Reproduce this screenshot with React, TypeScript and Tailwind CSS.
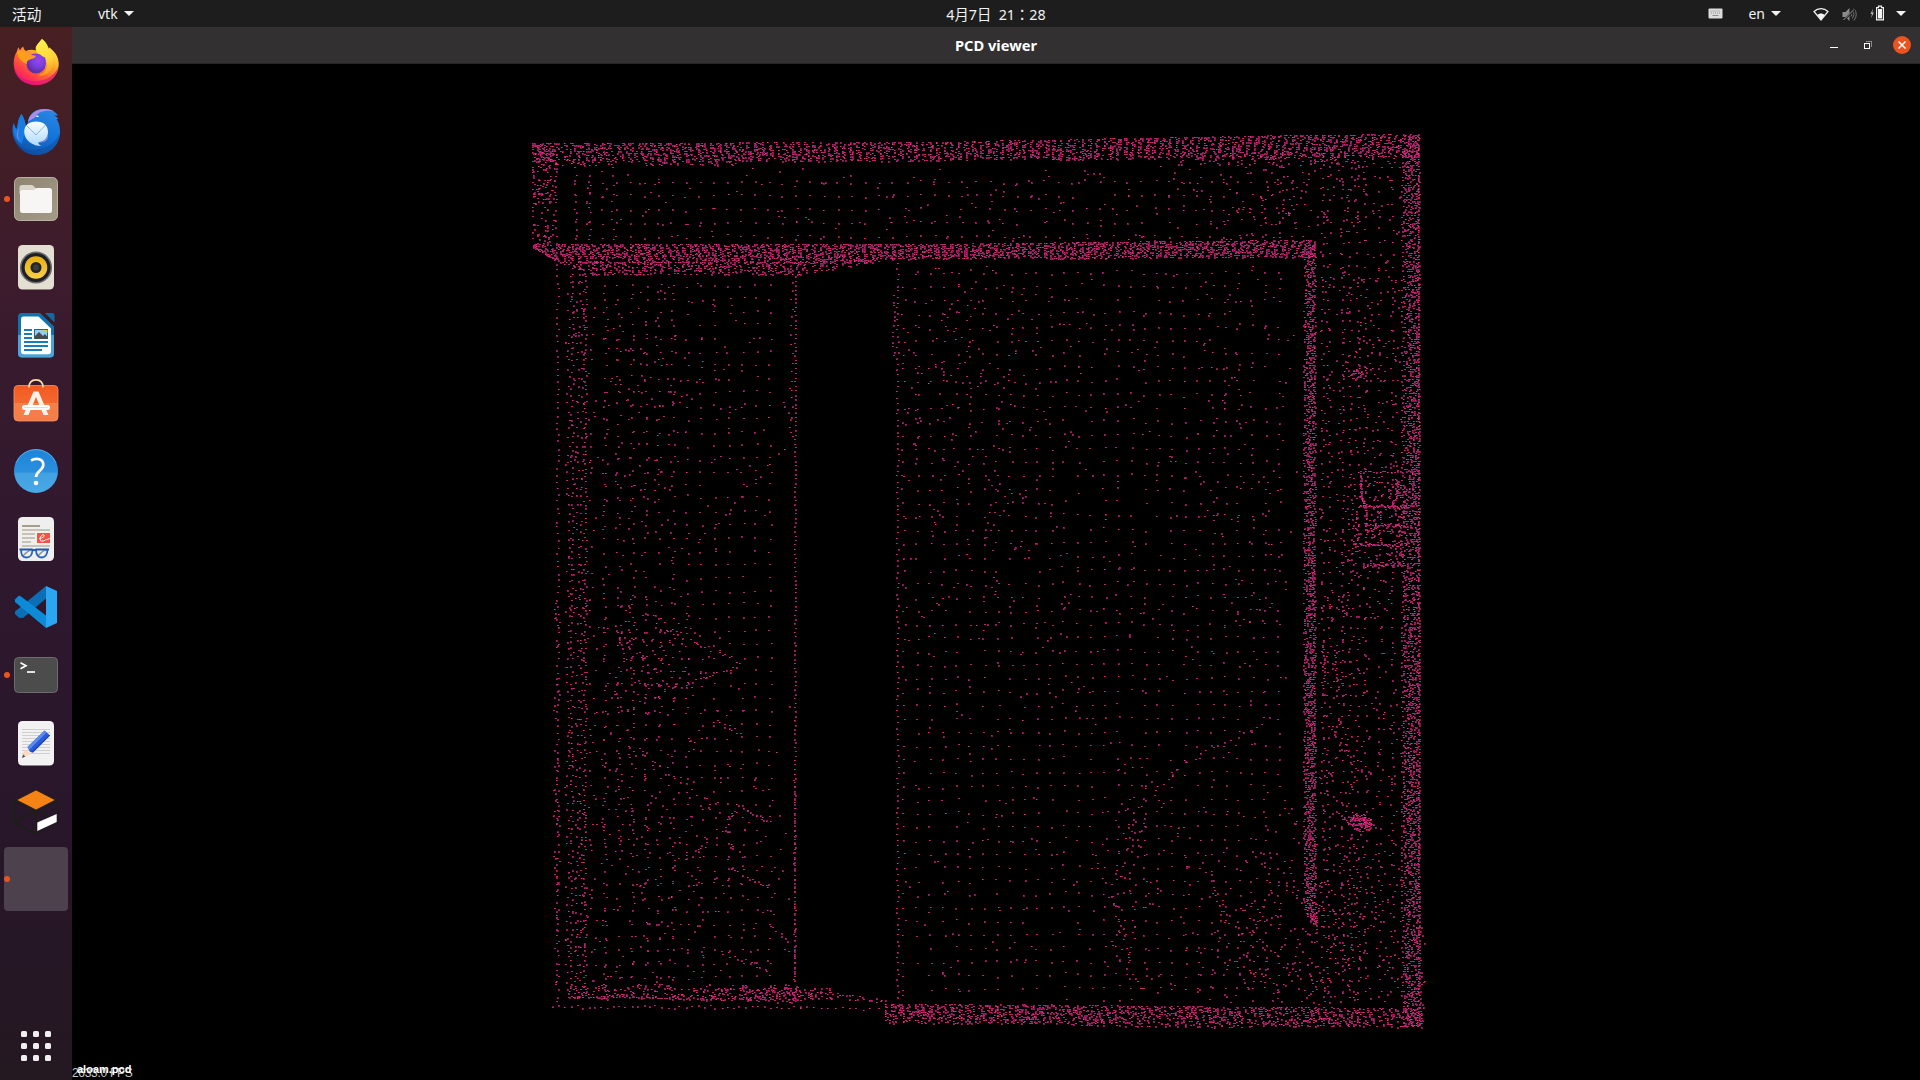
import React from 'react';

type Pt = [number, number];

function makeRng(seed: number) {
  let s = seed;
  return () => {
    s = (s + 0x6d2b79f5) | 0;
    let t = Math.imul(s ^ (s >>> 15), 1 | s);
    t = (t + Math.imul(t ^ (t >>> 7), 61 | t)) ^ t;
    return ((t ^ (t >>> 14)) >>> 0) / 4294967296;
  };
}

function interp(line: Pt[], x: number) {
  if (x <= line[0][0]) return line[0][1];
  for (let i = 1; i < line.length; i++) {
    if (x <= line[i][0]) {
      const [x0, y0] = line[i - 1];
      const [x1, y1] = line[i];
      return y0 + ((y1 - y0) * (x - x0)) / (x1 - x0);
    }
  }
  return line[line.length - 1][1];
}

// Point cloud in desktop coordinates; the viewport starts at (72, 63).
function buildCloud() {
  const rnd = makeRng(20240407);
  const pts: Pt[] = [];
  const add = (x: number, y: number) => pts.push([x, y]);
  const jit = (a: number) => (rnd() - 0.5) * 2 * a;

  // Horizontal band between two outlines, striped with slanted scan lines.
  // The slant runs from slantA at x0 to slantB at x1.
  const hBand = (top: Pt[], bottom: Pt[], x0: number, x1: number, slantA: number, slantB: number, density: number, contrast: number) => {
    for (let x = x0; x <= x1; x += 2) {
      const t = interp(top, x);
      const b = interp(bottom, x);
      const slant = slantA + ((slantB - slantA) * (x - x0)) / (x1 - x0);
      for (let y = t; y <= b; y += 2) {
        const phase = ((x + (y - t) * slant) / 7.3) * Math.PI * 2;
        const edge = y > b - 3 ? 0.8 : 1;
        if (rnd() < density * edge * (1 + contrast * Math.sin(phase))) add(x + jit(0.6), Math.min(b, Math.max(t, y + jit(0.8))));
      }
    }
  };
  const vBand = (x0: number, x1: number, y0: number, y1: number, density: number, contrast: number) => {
    for (let y = y0; y <= y1; y += 2) {
      const slant = 0.15 + 0.55 * Math.abs(Math.sin((y - 590) / 230));
      for (let x = x0; x <= x1; x += 2) {
        const phase = ((y + (x - x0) * slant) / 7.3) * Math.PI * 2;
        const edge = x < x0 + 3 ? 0.75 : 1;
        if (rnd() < density * edge * (1 + contrast * Math.sin(phase))) add(Math.min(x1, Math.max(x0 - 1, x + jit(0.9))), y + jit(0.6));
      }
    }
  };
  const grid = (x0: number, x1: number, y0: number, y1: number, sx: number, sy: number, j: number, keep: number) => {
    for (let x = x0; x <= x1; x += sx) {
      const off = rnd() * 3;
      for (let y = y0 + off; y <= y1; y += sy) if (rnd() < keep) add(x + jit(j), y + jit(j * 0.7));
    }
  };
  const scatter = (x0: number, x1: number, y0: number, y1: number, n: number) => {
    for (let i = 0; i < n; i++) add(x0 + rnd() * (x1 - x0), y0 + rnd() * (y1 - y0));
  };
  // Loose cluster, thick in the middle, optionally clipped to a box.
  const cluster = (cx: number, cy: number, rx: number, ry: number, n: number, box?: [number, number, number, number]) => {
    for (let i = 0; i < n; i++) {
      const x = cx + (rnd() + rnd() + rnd() - 1.5) * rx;
      const y = cy + (rnd() + rnd() + rnd() - 1.5) * ry;
      if (!box || (x > box[0] && x < box[1] && y > box[2] && y < box[3])) add(x, y);
    }
  };
  const line = (ax: number, ay: number, bx: number, by: number, step: number, j: number) => {
    const d = Math.hypot(bx - ax, by - ay);
    for (let s = 0; s <= d; s += step) add(ax + ((bx - ax) * s) / d + jit(j), ay + ((by - ay) * s) / d + jit(j));
  };

  // Lintel, upper edge
  hBand([[532, 142], [920, 141], [1180, 136], [1290, 134], [1418, 133]], [[532, 161], [640, 161], [920, 160], [1180, 157], [1418, 156]], 532, 1418, -0.55, 0.45, 0.5, 0.85);
  scatter(545, 740, 160, 164, 50);
  scatter(1180, 1418, 152, 163, 120);
  line(532, 143, 556, 163, 1.2, 1.6);
  scatter(532, 557, 145, 168, 25);
  // Lintel, left side
  scatter(532, 556, 164, 244, 105);
  line(533, 160, 533, 244, 7, 1);
  line(555, 162, 555, 244, 8, 1);
  // Lintel, lower edge
  hBand(
    [[532, 243], [920, 243], [1180, 240], [1315, 239]],
    [[532, 244], [555, 259], [582, 261], [800, 262], [900, 258], [1200, 257], [1315, 257]],
    532, 1315, -0.6, 0.55, 0.68, 0.6,
  );
  hBand([[560, 261], [800, 261], [895, 257]], [[560, 261], [580, 273], [800, 273], [895, 258]], 560, 895, -0.3, 0, 0.48, 0.4);
  line(533, 245, 556, 259, 1, 0.8);

  // Inner and outer right verticals
  vBand(1304, 1315, 244, 912, 0.72, 0.55);
  for (let y = 912; y < 922; y += 2) scatter(1304 + (y - 912), 1316, y, y + 2, 6);
  line(1316, 912, 1316, 934, 3, 0.8);
  vBand(1404, 1418, 134, 1025, 0.57, 0.6);
  line(1418, 136, 1419, 1024, 3.2, 0.7);
  line(1402, 150, 1402, 1020, 5, 1.3);
  scatter(1420, 1424, 925, 1028, 14);

  // Sill, right part
  hBand([[883, 1003], [1080, 1004], [1250, 1006], [1420, 1007]], [[883, 1021], [1080, 1024], [1250, 1026], [1422, 1027]], 885, 1421, -0.2, -0.5, 0.46, 0.75);
  scatter(883, 1090, 1003, 1022, 130);

  // Sill, left part
  scatter(568, 800, 983, 998, 260);
  scatter(700, 830, 986, 999, 90);
  line(568, 995, 690, 997, 2.8, 0.9);
  line(690, 997, 800, 1000, 3.4, 1.4);
  line(800, 990, 886, 1001, 2.3, 3);
  line(553, 1005, 800, 1006, 6, 1.5);
  line(800, 1006, 886, 1008, 7, 1.2);

  // Left frame columns
  line(557, 262, 557, 1004, 6.6, 1.3);
  [566.5, 570.5, 576, 580, 584].forEach((x, i) => line(x + (i === 4 ? 1 : 1.5), 274, x, 990, i === 4 ? 4.6 : i === 1 ? 6 : 8.5, 1.6));
  scatter(564, 587, 272, 985, 110);
  scatter(553, 559, 600, 985, 60);

  // Left panel
  grid(604, 782, 283, 980, 13.8, 13.3, 1.9, 0.9);
  grid(592, 672, 290, 978, 13, 14, 4, 0.75);
  cluster(640, 380, 150, 200, 230, [588, 790, 277, 560]);
  cluster(625, 800, 110, 290, 270, [588, 780, 600, 980]);
  cluster(735, 870, 100, 150, 110, [640, 795, 700, 980]);
  cluster(650, 650, 68, 56, 125, [600, 740, 590, 720]);
  line(615, 625, 626, 662, 4, 1.5);
  line(633, 680, 680, 686, 3.6, 1.8);
  line(684, 684, 739, 664, 4.4, 2);
  line(690, 637, 738, 661, 5, 2.8);
  line(716, 719, 740, 733, 3.8, 2);
  line(735, 802, 770, 822, 3, 1.6);
  line(610, 730, 720, 810, 7, 4);
  line(720, 829, 735, 810, 3, 3);
  line(684, 858, 710, 840, 4, 2);
  line(732, 869, 769, 886, 3, 2);
  line(632, 883, 645, 886, 3, 1.5);
  line(720, 950, 770, 970, 4, 2.5);
  line(770, 925, 790, 942, 4, 2);
  line(785, 400, 793, 440, 6, 2);
  line(700, 540, 790, 440, 9, 3);
  line(795, 275, 794, 980, 4.4, 0.6);
  line(791, 280, 791, 420, 9, 1);
  line(794, 780, 794, 980, 5.5, 0.6);

  // Centre panel
  line(897, 262, 897, 1000, 5.6, 0.8);
  line(893, 295, 893, 356, 5, 1);
  grid(903, 1290, 270, 1000, 13.4, 13.5, 2, 0.9);
  cluster(960, 400, 120, 270, 270, [902, 1080, 264, 640]);
  cluster(1100, 400, 280, 260, 170, [902, 1298, 264, 640]);
  cluster(1240, 420, 70, 280, 125, [1180, 1298, 264, 700]);
  scatter(902, 1298, 600, 1000, 150);
  line(1262, 722, 1185, 761, 7, 1.5);
  line(1185, 761, 1135, 810, 6.5, 3);
  line(1135, 810, 1112, 900, 6, 5);
  line(1112, 890, 1135, 985, 6, 6);
  line(1210, 870, 1220, 910, 5, 1.5);
  line(1220, 915, 1275, 950, 6, 5);
  cluster(1132, 860, 40, 150, 80, [1095, 1180, 740, 1000]);
  cluster(1290, 930, 110, 120, 330, [1160, 1402, 800, 1003]);
  cluster(1340, 970, 120, 80, 180, [1180, 1402, 880, 1003]);

  // Panel inside the lintel
  grid(575, 1300, 179, 237, 13.8, 13.6, 1.2, 0.92);
  scatter(575, 1200, 166, 240, 110);
  line(575, 165, 575, 240, 9, 1.3);
  line(590, 165, 589, 240, 9, 1.3);
  line(613, 165, 612, 243, 9, 1.4);
  cluster(1290, 190, 130, 70, 290, [1150, 1402, 160, 239]);

  // Right panel
  [1322, 1328, 1342, 1349, 1357, 1365, 1379, 1392].forEach((x) => line(x, 165, x, 1000, x > 1360 ? 12.5 : 11, 1.8));
  scatter(1319, 1402, 250, 470, 190);
  scatter(1319, 1402, 470, 620, 110);
  cluster(1342, 780, 44, 270, 320, [1318, 1372, 600, 960]);
  scatter(1370, 1402, 620, 920, 50);
  line(1323, 640, 1323, 695, 3.4, 1.2);
  line(1335, 645, 1337, 695, 3, 1.4);
  line(1330, 725, 1358, 765, 4, 3);
  line(1365, 690, 1402, 740, 4.4, 5);
  cluster(1356, 372, 12, 8, 38);
  cluster(1351, 819, 7, 5, 22);
  cluster(1361, 821, 10, 8, 85);
  cluster(1368, 823, 6, 4, 14);

  // Lock hardware
  line(1360, 470, 1402, 471, 2.8, 0.9);
  line(1360, 471, 1361, 498, 1.3, 0.7);
  line(1361, 497, 1366, 504, 0.8, 0.8);
  line(1396, 478, 1396, 497, 2, 1.5);
  line(1396, 497, 1390, 504, 1.2, 1);
  line(1359, 505, 1408, 505, 1.2, 1.3);
  line(1357, 508, 1356, 550, 2, 1.8);
  line(1365, 505, 1366, 530, 1.6, 1);
  line(1363, 523, 1402, 524, 1.9, 1.3);
  line(1355, 543, 1402, 544, 1.4, 1.3);
  line(1362, 564, 1402, 563, 1.2, 1.6);
  line(1353, 478, 1352, 582, 5, 1.8);
  scatter(1367, 1393, 474, 500, 26);
  scatter(1366, 1404, 507, 562, 90);
  scatter(1395, 1404, 474, 562, 50);

  const dim: string[] = [];
  const mid: string[] = [];
  const hot: string[] = [];
  for (const [fx, fy] of pts) {
    const x = Math.round(fx) - 72;
    const y = Math.round(fy) - 63;
    const k = rnd();
    if (k < 0.45) {
      dim.push(`M${x} ${y}h2v2h-2z`);
      mid.push(`M${x} ${y + (k < 0.2 ? 1 : 0)}h1v1h-1z`);
    } else if (k < 0.8) {
      mid.push(`M${x} ${y}h2v1h-2z`);
    } else {
      dim.push(`M${x} ${y}h2v1h-2z`);
      hot.push(`M${x} ${y}h1v1h-1z`);
    }
  }
  return { dim: dim.join(''), mid: mid.join(''), hot: hot.join('') };
}

const cloud = buildCloud();

function PointCloud() {
  return (
    <svg className="block h-full w-full" viewBox="0 0 1848 1016" preserveAspectRatio="xMinYMin slice" shapeRendering="crispEdges">
      <path d={cloud.dim} fill="#86164f" />
      <path d={cloud.mid} fill="#c0206f" />
      <path d={cloud.hot} fill="#f02b8c" />
    </svg>
  );
}

const Icon = ({ children }: { children: React.ReactNode }) => (
  <svg className="block h-16 w-16" viewBox="0 0 64 64" fill="none">
    {children}
  </svg>
);

const Firefox = () => (
  <Icon>
    <defs>
      <linearGradient id="ffBody" x1="48" y1="10" x2="18" y2="52" gradientUnits="userSpaceOnUse">
        <stop offset="0.05" stopColor="#fff44f" />
        <stop offset="0.35" stopColor="#ffb02a" />
        <stop offset="0.6" stopColor="#ff6a2f" />
        <stop offset="0.85" stopColor="#ff2f52" />
        <stop offset="1" stopColor="#e31587" />
      </linearGradient>
      <linearGradient id="ffTail" x1="38" y1="8" x2="46" y2="46" gradientUnits="userSpaceOnUse">
        <stop stopColor="#fff44f" />
        <stop offset="0.5" stopColor="#ffd83a" />
        <stop offset="1" stopColor="#ff8a1e" />
      </linearGradient>
      <radialGradient id="ffGlobe" cx="0.6" cy="0.35" r="0.7">
        <stop stopColor="#9a45e8" />
        <stop offset="0.5" stopColor="#7a3fe0" />
        <stop offset="1" stopColor="#5b2d9c" />
      </radialGradient>
    </defs>
    <path d="M38 8c3 2.500 4.700 5.500 5.600 8.500l1.200 2c.3-.8.3-1.500.2-2.300 4.300 3 9.700 8.300 9.700 16.600C54.700 45.500 44.500 54 32.200 54S9.700 44.700 9.700 32.500c0-5 1.300-9.200 3.300-12.200.2-1.500.7-2.800 1.700-4 .2 1.300.7 2.400 1.500 3.200.5-1.600 1.600-3 3-4 .2 1.900 1.100 3.400 2.700 4.500 3-1.500 6.500-1.800 10.300-.6C30 15.500 34.500 12.500 38 8z" fill="url(#ffBody)" />
    <circle cx="32" cy="33" r="9.500" fill="url(#ffGlobe)" />
    <path d="M38 8c7 5.500 6.300 10.500 9.500 15 4.200 6 2.500 16.500-5.500 20.300-2.500 1.200-5.500 1.500-8 1 8-2 10.500-8.300 8.300-14.300-1.700-4.600-9.300-6-10.100-10.800C31.600 14.500 35.500 11.500 38 8z" fill="url(#ffTail)" />
    <path d="M25 25.500c3-3.500 9-4 13-.500l3 1.500c1.500 4 1 8-.5 11-2 4-12 6-16 0-1.500-3-1.500-8 .5-12z" fill="url(#ffGlobe)" />
    <path d="M13 20.300c2.500-1.400 5.700-1.300 8.500 1.200 2.500 1.200 6 3 10.300 3.200-.3 2-2.100 2.800-4.500 3.300-3 .6-5 2.300-4.700 5-3.900-1.700-9.100-4.500-9.600-12.700z" fill="#ff9d1f" />
    <path d="M10 36c1 4.500 5.500 14 21 14 12 0 20-6 23-14-1 11-10.500 18-22 18C20 54 11 47 10 36z" fill="#e3157b" opacity="0.750" />
  </Icon>
);

const Thunderbird = () => (
  <Icon>
    <defs>
      <linearGradient id="tbBody" x1="44" y1="10" x2="24" y2="56" gradientUnits="userSpaceOnUse">
        <stop stopColor="#2a86e0" />
        <stop offset="0.5" stopColor="#1373d9" />
        <stop offset="1" stopColor="#0f53a8" />
      </linearGradient>
      <linearGradient id="tbMail" x1="0" y1="22" x2="0" y2="48" gradientUnits="userSpaceOnUse">
        <stop stopColor="#fdfeff" />
        <stop offset="1" stopColor="#a9d8ff" />
      </linearGradient>
    </defs>
    <path d="M17.500 15c-4 6-3 10.500-5 15-1.500-1.500-2.500-3.500-3-6-3 10 .5 19 7 25C21.500 54 26.500 56 32 56c14 0 24-10.500 24-23.500 0-5-1-9-3.500-12.500h2c-1-1.500-2.500-2.500-4.500-3.500h4c-2-3.500-7-6.500-14-6.500-8 0-15.500 4.500-16 13l-2 6c-.5-4-1.500-9-4.500-14z" fill="url(#tbBody)" />
    <path d="M17.500 15c-4.500 6-3 11-5 15.500-1.500-1.500-2-4-2.500-6.500-2 9 1 17 8 21l4-17c-.5-4-1.500-9-4.500-13z" fill="#167de3" />
    <path d="M16 28c-3 5-2.500 11 .5 15-4.500-4-5-10-.5-15z" fill="#8d84dc" />
    <path d="M24 23c1-7 7-13 17-13 4 0 7 1 9.500 2.500C42 10.500 34 12 30.500 19c-1.500.5-4 2-6.500 4z" fill="#ab8be8" />
    <path d="M32 22.500c7.500 0 12 4 12 10.500 0 6.500-4.500 10.500-10 10.500 1 2.200 2.500 3.200 4 3.500-6 .8-17.800-4-17.800-14 0-6.500 4.800-10.500 11.800-10.500z" fill="url(#tbMail)" />
    <path d="M22 26l10 10 9.500-10" stroke="#8eb8dc" strokeWidth="1" />
    <path d="M44 36c-1.500 4-4.500 6.500-9 7 4 1.500 10-1 9-7z" fill="#7a86dc" />
    <path d="M31.500 17.300c1-1.200 2.500-1.200 3.500 0-1 .8-2.500.8-3.500 0z" fill="#fff" />
    <path d="M10 38c3 9 13 14.500 23 12.500 10-1.500 19-7 22.500-16C56 46 45 56 32 56S12 48 10 38z" fill="#0c4a9c" opacity="0.450" />
  </Icon>
);

const Files = () => (
  <Icon>
    <defs>
      <linearGradient id="fiBg" x1="12" y1="10" x2="52" y2="54" gradientUnits="userSpaceOnUse">
        <stop stopColor="#8d8571" />
        <stop offset="1" stopColor="#a39b88" />
      </linearGradient>
    </defs>
    <rect x="10.500" y="10.500" width="43" height="43" rx="5" fill="url(#fiBg)" stroke="#b7b1a2" />
    <path d="M15.500 20.500q0-2.500 2.500-2.500h9.500c1.500 0 2 .7 3 2l1.500 2v5h-16.500z" fill="#d9d5c9" />
    <path d="M16 26q0-3 3-3h10c2 0 2-2 4-2h12.500q2.500 0 2.500 2.500v20q0 2.500-2.500 2.500h-27q-2.500 0-2.500-2.500z" fill="#f7f6f5" />
  </Icon>
);

const Rhythmbox = () => (
  <Icon>
    <defs>
      <linearGradient id="rhCone" x1="0" y1="21" x2="0" y2="44" gradientUnits="userSpaceOnUse">
        <stop stopColor="#e5b010" />
        <stop offset="1" stopColor="#f8d04c" />
      </linearGradient>
    </defs>
    <rect x="14" y="10" width="36" height="44.500" rx="4.500" fill="#e4dfd3" />
    <circle cx="32" cy="32.500" r="15.300" fill="#1f2027" stroke="#6d6d70" strokeWidth="1.500" />
    <circle cx="32" cy="32.500" r="11.300" fill="url(#rhCone)" />
    <circle cx="32" cy="32.500" r="5.500" fill="#232427" />
    <circle cx="32" cy="32.500" r="3" fill="#3b3c40" />
  </Icon>
);

const Writer = () => (
  <Icon>
    <path d="M17.500 10H36l14 13.500V50.500q0 4-4 4H18q-4 0-4-4V14q0-4 3.500-4z" fill="#1073ab" />
    <path d="M14 32h36v18.500q0 4-4 4H18q-4 0-4-4z" fill="#4ba4d6" />
    <path d="M41 10h7q2.500 0 2.500 2.500v7z" fill="#126aa0" />
    <path d="M19 13.500h15.500l12.500 12V48q0 3.300-3 3.300H20q-3 0-3-3.300V16q0-2.500 2-2.500z" fill="#fff" />
    <path d="M20 27h8M20 31h8M20 35h8M20 39h24M20 43h24M20 47h18" stroke="#1b7db5" strokeWidth="2" />
    <rect x="30.500" y="26.500" width="13" height="9" fill="#8fd0f0" stroke="#0e6ba3" />
    <path d="M31 36v-3l4-4 4 4 2-2 2.500 3v2z" fill="#4a4a4a" />
    <path d="M40 27h3.500v3z" fill="#ffc400" />
  </Icon>
);

const Software = () => (
  <Icon>
    <defs>
      <linearGradient id="swBg" x1="0" y1="14" x2="0" y2="50" gradientUnits="userSpaceOnUse">
        <stop stopColor="#f25a20" />
        <stop offset="0.49" stopColor="#f3672f" />
        <stop offset="0.5" stopColor="#f58049" />
        <stop offset="1" stopColor="#f57c48" />
      </linearGradient>
    </defs>
    <rect x="10" y="14.500" width="44" height="35.500" rx="4" fill="url(#swBg)" stroke="#f59468" strokeWidth="0.800" />
    <path d="M25 16.500c0-5.500 3-7.700 7-7.700s7 2.200 7 7.700" stroke="#f8dca8" strokeWidth="1.700" />
    <path d="M29.500 20.500h5L44.500 44h-5L32 26 24.500 44h-5z" fill="#fdf1ea" />
    <rect x="18" y="34" width="28" height="5" rx="2.500" fill="#fff" />
    <path d="M20 36.500h24" stroke="#f4cdbc" strokeWidth="0.800" />
  </Icon>
);

const Help = () => (
  <Icon>
    <defs>
      <linearGradient id="heBg" x1="0" y1="10" x2="0" y2="54" gradientUnits="userSpaceOnUse">
        <stop stopColor="#1b82d8" />
        <stop offset="0.53" stopColor="#2b90dd" />
        <stop offset="0.54" stopColor="#42a1e2" />
        <stop offset="1" stopColor="#49a8e6" />
      </linearGradient>
    </defs>
    <circle cx="32" cy="32" r="22" fill="url(#heBg)" />
    <path d="M12 24a21.600 21.600 0 0 1 40 0" stroke="#69b4ea" strokeWidth="0.800" />
    <path d="M27 21.500c6-3.500 12.300-1 12.300 4.300 0 5.700-7.300 6.200-7.300 12.200" stroke="#fff" strokeWidth="2.700" />
    <circle cx="32" cy="44" r="2.300" fill="#fff" />
  </Icon>
);

const Reader = () => (
  <Icon>
    <rect x="14" y="10" width="36" height="44" rx="4.500" fill="#efefee" />
    <path d="M18 19h18" stroke="#a5a08c" strokeWidth="2" />
    <path d="M18 23h28M18 27h13M18 31h13M18 35h9M18 39h28" stroke="#c6c2b5" strokeWidth="2" />
    <rect x="33" y="26" width="13" height="10" fill="#f4534a" />
    <path d="M35.500 31.500c3-.5 5.500-2 4.500-3.500-1.500-1-4 1.500-4 4 0 2.500 3 2.500 4.500 1.500 1.500-1.300 2.500-.5 5-2" stroke="#fff" strokeWidth="1" />
    <path d="M19 49q5-6 10-6.500M34 49q5-6 9-6.500" stroke="#8e9092" strokeWidth="1.300" />
    <path d="M15.500 42.500h12l2.500.7 2.500-.7H45" stroke="#2458ae" strokeWidth="2.200" />
    <path d="M17 42.500c.2 5 1 8 5.500 8 4 0 5.500-2 6-7.500M32 43c.3 5.500 2 7.500 5.500 7.500 4.500 0 5.800-3 6-8" stroke="#2563bb" strokeWidth="1.800" />
  </Icon>
);

const VsCode = () => (
  <Icon>
    <path d="M42 11v12.500L19 43l-4-.2-4-3.800v-2.500z" fill="#0a6fb4" />
    <path d="M11 24.500l3.500-3.500q1-.6 2.200.2L42 40.500V53L11 27z" fill="#0d8bd8" />
    <path d="M42 11l11 5v32l-11 5z" fill="#2aa6f2" />
  </Icon>
);

const Terminal = () => (
  <Icon>
    <rect x="10.500" y="14.500" width="43" height="35" rx="4" fill="#4c4c4c" stroke="#6c6c6c" />
    <path d="M16.500 19.700l5.500 3-5.500 3" stroke="#fff" strokeWidth="1.700" />
    <path d="M23 29h8" stroke="#fff" strokeWidth="1.700" />
  </Icon>
);

const TextEditor = () => (
  <Icon>
    <rect x="14" y="10" width="36" height="44.500" rx="4.500" fill="#f2f2f2" />
    <path d="M18 18.500h28M18 21.500h28M18 24.500h28M18 27.500h28M18 30.500h28M18 33.500h28M18 36.500h28M18 39.500h28M18 42.500h28" stroke="#cfcfcf" strokeWidth="1" />
    <path d="M18 47l3-9 6 5z" fill="#fad9c0" />
    <path d="M18 47l1-3.500 2.300 1.900z" fill="#4a4a4a" />
    <path d="M23.500 36L40.500 19.500l5.500 5L29 41.500l-3-.5z" fill="#2a5bd7" />
    <path d="M23.500 36L40.500 19.500l2 2L25 39z" fill="#5c8bf0" />
    <path d="M27.500 41L45 23.700l1 .8L29 41.500z" fill="#1d45b5" />
  </Icon>
);

const Cube = () => (
  <Icon>
    <path d="M10 21v23l22 11V31zM10 44l22-14 22 14" stroke="#1c1f17" strokeWidth="1.800" />
    <path d="M32 31l22-9v21L32 55" stroke="#1c1f17" strokeWidth="1.200" />
    <path d="M32 11l19.500 10L32 31 12.500 21z" fill="#f68315" stroke="#1c1f17" strokeWidth="0.800" />
    <path d="M33.300 43.500L52.700 35v8L33.300 52z" fill="#fff" />
  </Icon>
);

const Caret = () => (
  <svg className="relative -top-px block h-[5px] w-[10px]" viewBox="0 0 10 5">
    <path d="M0 0h10L5 5z" fill="#f2f2f2" />
  </svg>
);

const dock: { name: string; icon: React.ReactNode; running?: boolean; active?: boolean }[] = [
  { name: 'Firefox', icon: <Firefox /> },
  { name: 'Thunderbird', icon: <Thunderbird /> },
  { name: 'Files', icon: <Files />, running: true },
  { name: 'Rhythmbox', icon: <Rhythmbox /> },
  { name: 'Writer', icon: <Writer /> },
  { name: 'Software', icon: <Software /> },
  { name: 'Help', icon: <Help /> },
  { name: 'Document Viewer', icon: <Reader /> },
  { name: 'Code', icon: <VsCode /> },
  { name: 'Terminal', icon: <Terminal />, running: true },
  { name: 'Text Editor', icon: <TextEditor /> },
  { name: 'Cube', icon: <Cube /> },
  { name: 'vtk', icon: null, running: true, active: true },
];

function TopBar() {
  return (
    <header className="grid h-[27px] shrink-0 grid-cols-3 items-center bg-[#1d1d1d] text-[14.67px] leading-[27px] text-[#f2f2f2]">
      <div className="flex h-[27px] items-center pl-3">
        <span className="w-[86px] pt-px">活动</span>
        <span className="relative -top-px w-[26px] text-[14px]">vtk</span>
        <Caret />
      </div>
      <div className="flex justify-center whitespace-pre pl-[72px] pt-px font-['Noto_Sans','Noto_Sans_CJK_JP',sans-serif] text-[14.300px]">4月7日  21：28</div>
      <div className="flex h-[27px] items-center justify-end pr-[14px]">
        <svg className="mr-[25px] block h-[12px] w-[15px]" viewBox="0 0 15 12">
          <rect x="0.500" y="0.500" width="14" height="10" rx="1" fill="#dcdcdc" />
          <path d="M2.500 3h10M3 5h9" stroke="#8a8a8a" strokeWidth="1" strokeDasharray="1 1" />
          <path d="M4.500 7.500h6" stroke="#8a8a8a" />
        </svg>
        <span className="relative -top-px mr-[6px] text-[14px]">en</span>
        <div className="mr-[2px]">
          <Caret />
        </div>
        <svg className="ml-[30px] mr-[13px] block h-[14px] w-[16px]" viewBox="0 0 16 14">
          <path d="M1 4.500C5 .7 11 .7 15 4.500L8 13z" fill="none" stroke="#f2f2f2" strokeWidth="1.200" />
          <path d="M4.300 8c2.200-2 5.200-2 7.400 0L8 13z" fill="#f2f2f2" />
        </svg>
        <svg className="mr-[13px] block h-[15px] w-[15px]" viewBox="0 0 15 15">
          <path d="M.5 5h3L7.500 1v13l-4-4h-3z" fill="#8b8b8b" />
          <path d="M9 5.500q1.500 2 0 4M10.500 3.500q3 4 0 8M12 1.500q4.500 6 0 12" fill="none" stroke="#777" />
          <path d="M1.500 13.500L13 2" stroke="#1d1d1d" strokeWidth="2" />
          <path d="M1.500 13L12 2.500" stroke="#999" strokeWidth="1" />
        </svg>
        <svg className="relative -top-px mr-[11px] block h-[16px] w-[15px]" viewBox="0 0 15 16">
          <path d="M3 3.500L.5 9H2l-1 4L4 7.500H2.300z" fill="#b5b5b5" />
          <path d="M6.600 2.600h1.900V1.100h3v1.500h1.900v12.300H6.600z" fill="none" stroke="#f2f2f2" strokeWidth="1.200" />
          <rect x="8" y="4" width="4" height="9.500" fill="#f2f2f2" />
        </svg>
        <Caret />
      </div>
    </header>
  );
}

function Dock() {
  return (
    <nav className="flex w-[72px] shrink-0 flex-col items-center justify-between bg-[linear-gradient(to_bottom,#482022_0%,#3b1b2d_26%,#2f182e_50%,#28162a_75%,#241821_100%)] pt-1">
      <div className="flex flex-col gap-1">
        {dock.map((item) => (
          <div key={item.name} className={item.active ? 'relative h-16 w-16 rounded bg-[#4e414e]' : 'relative h-16 w-16'}>
            {item.icon}
            {item.running && <span className="absolute left-0 top-[29px] h-[6px] w-[6px] rounded-full bg-[#e95420]" />}
          </div>
        ))}
      </div>
      <div className="mb-[19px] grid grid-cols-3 gap-[6px]">
        {Array.from({ length: 9 }, (_, i) => (
          <span key={i} className="h-[6px] w-[6px] rounded-[1.500px] bg-[#f0eeee]" />
        ))}
      </div>
    </nav>
  );
}

function TitleBar() {
  return (
    <div className="grid h-[37px] shrink-0 grid-cols-3 items-center border-b border-[#262425] bg-[#323031] text-white">
      <span />
      <span className="pt-px text-center text-[14.67px] font-bold leading-[35px]">PCD viewer</span>
      <div className="flex items-center justify-end pr-[9px]">
        <svg className="mr-[26px] block h-[10px] w-[8px]" viewBox="0 0 8 10" shapeRendering="crispEdges">
          <path d="M0 7.500h8" stroke="#fff" />
        </svg>
        <svg className="mr-[20px] block h-[9px] w-[9px]" viewBox="0 0 9 9" shapeRendering="crispEdges">
          <path d="M.5 2.500h5v5h-5z" fill="none" stroke="#fff" />
          <path d="M2 .5h5.500V6" fill="none" stroke="#8b8b8b" />
        </svg>
        <svg className="block h-[18px] w-[18px]" viewBox="0 0 18 18">
          <circle cx="9" cy="9" r="9" fill="#e95420" />
          <path d="M5.500 5.500l7 7M12.500 5.500l-7 7" stroke="#fff" strokeWidth="1.500" />
        </svg>
      </div>
    </div>
  );
}

export default function App() {
  return (
    <div className="flex h-[1080px] w-[1920px] flex-col overflow-hidden bg-black font-['Noto_Sans','Noto_Sans_CJK_SC',sans-serif]">
      <TopBar />
      <div className="flex min-h-0 flex-1">
        <Dock />
        <main className="flex min-w-0 flex-1 flex-col">
          <TitleBar />
          <div className="relative min-h-0 flex-1 bg-black">
            <PointCloud />
            <span className="absolute bottom-0 left-0 whitespace-nowrap font-['Liberation_Sans',sans-serif] text-[12px] leading-[14px] tracking-[-0.300px] text-[#c8c8c8]">2633.0 FPS</span>
            <span className="absolute bottom-[4px] left-[5px] whitespace-nowrap font-['Liberation_Sans',sans-serif] text-[11px] font-bold leading-[13px] text-white">aloam.pcd</span>
          </div>
        </main>
      </div>
    </div>
  );
}
